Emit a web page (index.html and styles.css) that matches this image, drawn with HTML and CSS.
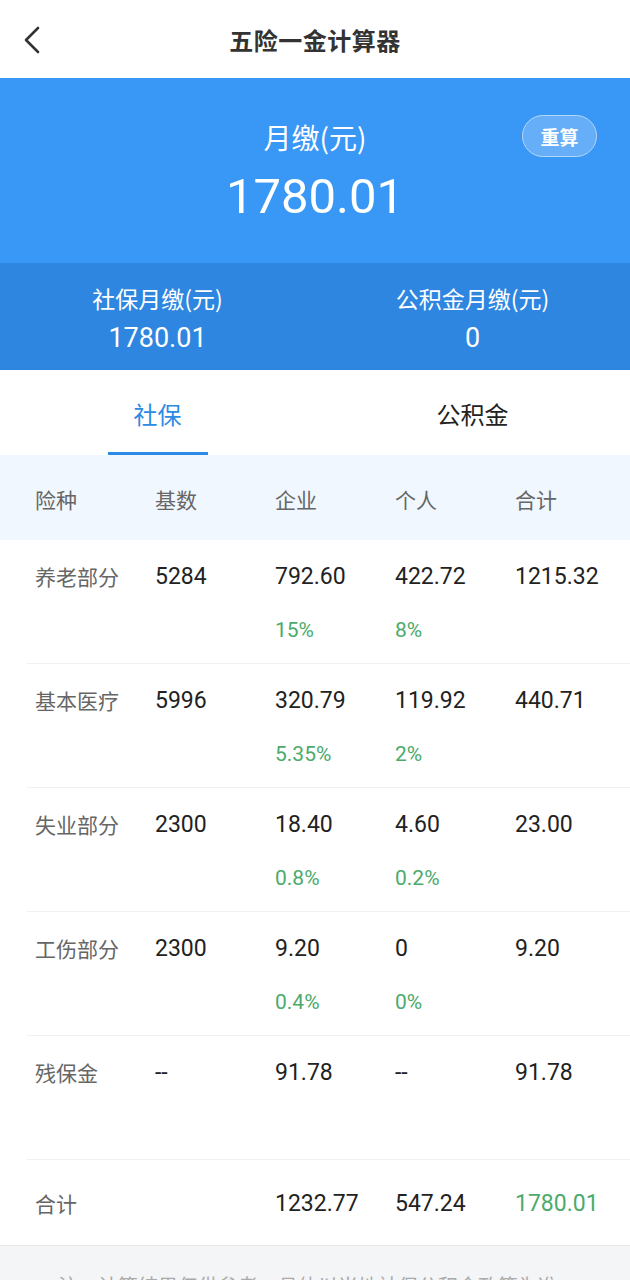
FILE: index.html
```html
<!DOCTYPE html>
<html lang="zh">
<head>
<meta charset="utf-8">
<title>五险一金计算器</title>
<link rel="stylesheet" href="styles.css">
</head>
<body>
<div class="page">
  <header class="topbar">
    <div class="back">
      <svg width="20" height="30" viewBox="0 0 20 30"><polyline points="15,3 3,15 15,27" fill="none" stroke="#333" stroke-width="2.6" stroke-linecap="round" stroke-linejoin="round"/></svg>
    </div>
    <div class="title">五险一金计算器</div>
    <div></div>
  </header>

  <section class="hero">
    <div class="hero-label">月缴(元)</div>
    <div class="hero-value">1780.01</div>
    <button class="reset">重算</button>
  </section>

  <section class="subband">
    <div class="sub-item">
      <div class="sub-label">社保月缴(元)</div>
      <div class="sub-value">1780.01</div>
    </div>
    <div class="sub-item">
      <div class="sub-label">公积金月缴(元)</div>
      <div class="sub-value">0</div>
    </div>
  </section>

  <nav class="tabs">
    <div class="tab"><span class="tab-text active">社保</span></div>
    <div class="tab"><span class="tab-text">公积金</span></div>
  </nav>

  <div class="thead">
    <div>险种</div><div>基数</div><div>企业</div><div>个人</div><div>合计</div>
  </div>

  <div class="rows">
    <div class="row">
      <div class="lbl">养老部分</div>
      <div class="num">5284</div>
      <div class="num">792.60<div class="pct">15%</div></div>
      <div class="num">422.72<div class="pct">8%</div></div>
      <div class="num">1215.32</div>
    </div>
    <div class="row">
      <div class="lbl">基本医疗</div>
      <div class="num">5996</div>
      <div class="num">320.79<div class="pct">5.35%</div></div>
      <div class="num">119.92<div class="pct">2%</div></div>
      <div class="num">440.71</div>
    </div>
    <div class="row">
      <div class="lbl">失业部分</div>
      <div class="num">2300</div>
      <div class="num">18.40<div class="pct">0.8%</div></div>
      <div class="num">4.60<div class="pct">0.2%</div></div>
      <div class="num">23.00</div>
    </div>
    <div class="row">
      <div class="lbl">工伤部分</div>
      <div class="num">2300</div>
      <div class="num">9.20<div class="pct">0.4%</div></div>
      <div class="num">0<div class="pct">0%</div></div>
      <div class="num">9.20</div>
    </div>
    <div class="row">
      <div class="lbl">残保金</div>
      <div class="num">--</div>
      <div class="num">91.78</div>
      <div class="num">--</div>
      <div class="num">91.78</div>
    </div>
  </div>

  <div class="total">
    <div class="lbl">合计</div>
    <div class="num"></div>
    <div class="num">1232.77</div>
    <div class="num">547.24</div>
    <div class="num green">1780.01</div>
  </div>

  <footer class="note">注：计算结果仅供参考，具体以当地社保公积金政策为准</footer>
</div>
</body>
</html>
```

FILE: styles.css
```css
* { box-sizing: border-box; }
html, body { margin: 0; padding: 0; }
body {
  width: 630px;
  background: #f4f5f7;
  font-family: Roboto, "Noto Sans CJK SC", "Noto Sans", sans-serif;
  overflow: hidden;
}
.page { background: #f4f5f7; }

.topbar {
  height: 78px;
  background: #fff;
  display: grid;
  grid-template-columns: 90px 1fr 90px;
  align-items: center;
}
.back { padding-left: 23px; display: flex; align-items: center; padding-top: 1px; }
.title {
  text-align: center;
  font-family: "Noto Sans CJK SC", sans-serif;
  font-weight: 700;
  font-size: 24px;
  color: #333;
  letter-spacing: 0.5px;
}

.hero {
  position: relative;
  height: 185px;
  background: #3997f6;
  color: #fff;
  text-align: center;
  padding-top: 40px;
}
.hero-label {
  font-family: "Noto Sans CJK SC", sans-serif;
  font-size: 28px;
  line-height: 38px;
}
.hero-value {
  margin-top: 13px;
  font-family: Roboto, sans-serif;
  font-size: 49px;
  line-height: 56px;
}
.reset {
  position: absolute;
  right: 33px;
  top: 37px;
  width: 75px;
  height: 42px;
  border-radius: 21px;
  border: 1.5px solid #b3d7fb;
  background: #66aef7;
  color: #fff;
  font-family: "Noto Sans CJK SC", sans-serif;
  font-weight: 700;
  font-size: 19px;
  padding: 0;
}

.subband {
  height: 107px;
  background: #2e86e0;
  color: #fff;
  display: grid;
  grid-template-columns: 1fr 1fr;
  text-align: center;
  padding-top: 19px;
}
.sub-label {
  font-family: "Noto Sans CJK SC", sans-serif;
  font-size: 23px;
  line-height: 32px;
}
.sub-value {
  margin-top: 6px;
  font-family: Roboto, sans-serif;
  font-size: 27px;
  line-height: 36px;
}

.tabs {
  height: 85px;
  background: #fff;
  display: grid;
  grid-template-columns: 1fr 1fr;
}
.tab { display: flex; justify-content: center; }
.tab-text {
  display: block;
  width: 100px;
  text-align: center;
  padding-top: 6px;
  line-height: 76px;
  height: 85px;
  border-bottom: 3px solid transparent;
  font-family: "Noto Sans CJK SC", sans-serif;
  font-size: 24px;
  color: #222;
}
.tab-text.active { color: #2b8ae3; border-bottom-color: #2b8ae3; }

.thead {
  height: 85px;
  background: #f1f7fe;
  display: grid;
  grid-template-columns: repeat(5, 120px);
  padding-left: 35px;
  align-items: center;
  padding-top: 2px;
  font-family: "Noto Sans CJK SC", sans-serif;
  font-size: 21px;
  color: #666;
}

.rows { background: #fff; padding-left: 27px; }
.row {
  height: 124px;
  border-bottom: 1px solid #f0f0f0;
  display: grid;
  grid-template-columns: repeat(5, 120px);
  padding-left: 8px;
  padding-top: 23px;
  align-items: start;
}
.lbl {
  font-family: "Noto Sans CJK SC", sans-serif;
  font-size: 21px;
  line-height: 26px;
  color: #666;
}
.num {
  font-family: Roboto, sans-serif;
  font-size: 23px;
  line-height: 28px;
  color: #222;
}
.pct {
  margin-top: 25px;
  color: #4caa6c;
  font-size: 21px;
}
.green { color: #4caa6c; }

.total {
  height: 86px;
  background: #fff;
  border-bottom: 1px solid #e9e9e9;
  display: grid;
  grid-template-columns: repeat(5, 120px);
  padding-left: 35px;
  padding-top: 30px;
  align-items: start;
}

.note {
  padding: 26px 0 0 58px;
  font-family: "Noto Sans CJK SC", sans-serif;
  font-size: 20px;
  line-height: 28px;
  color: #aaa;
}
```
